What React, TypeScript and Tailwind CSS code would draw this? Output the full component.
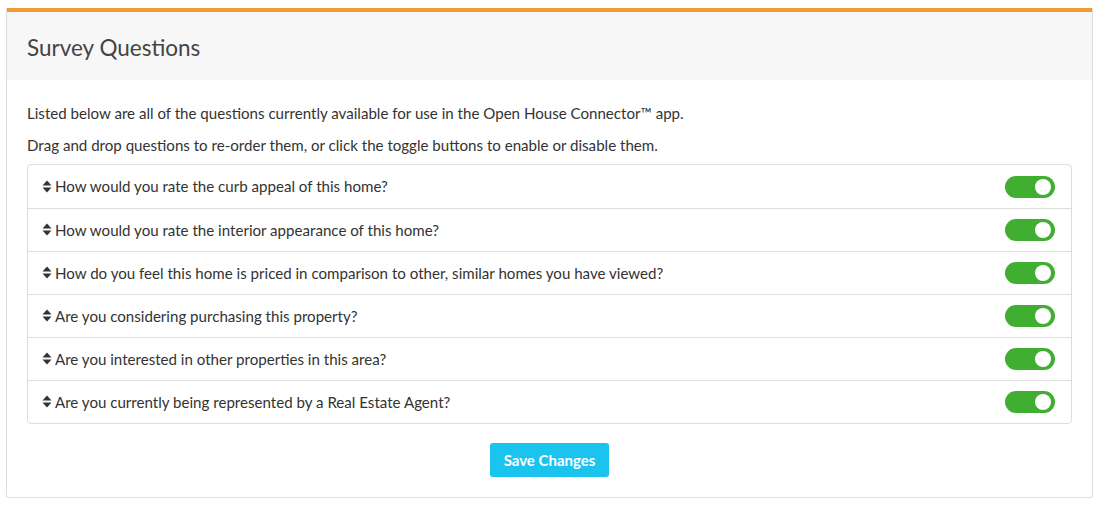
import React, { useState } from 'react';

const initialQuestions = [
  'How would you rate the curb appeal of this home?',
  'How would you rate the interior appearance of this home?',
  'How do you feel this home is priced in comparison to other, similar homes you have viewed?',
  'Are you considering purchasing this property?',
  'Are you interested in other properties in this area?',
  'Are you currently being represented by a Real Estate Agent?',
];

function SortIcon() {
  return (
    <svg width="10" height="13" viewBox="0 0 10 13" className="mr-[3px] shrink-0">
      <path d="M5 0.5 L9.5 5.5 L0.5 5.5 Z" fill="#333" />
      <path d="M5 12.5 L9.5 7.5 L0.5 7.5 Z" fill="#333" />
    </svg>
  );
}

function Toggle({ on, onClick }: { on: boolean; onClick: () => void }) {
  return (
    <button
      type="button"
      onClick={onClick}
      className={`relative h-[22px] w-[50px] rounded-full ${on ? 'bg-[#40ae31]' : 'bg-[#ccc]'}`}
    >
      <span
        className={`absolute top-[3px] h-[16px] w-[16px] rounded-full bg-white ${on ? 'left-[30px]' : 'left-[4px]'}`}
      />
    </button>
  );
}

export default function App() {
  const [enabled, setEnabled] = useState(initialQuestions.map(() => true));

  return (
    <div className="min-h-[508px] bg-white px-[6px] pt-[8px] font-['Lato',sans-serif] text-[#333]">
      <div className="rounded-b-[3px] border border-t-0 border-[#ddd]">
        <div className="border-t-4 border-[#f39a31] bg-[#f7f7f7] px-[20px] pb-[18px] pt-[22px]">
          <h2 className="text-[22.5px] leading-[28px] text-[#444]">Survey Questions</h2>
        </div>
        <div className="px-[20px] pb-[20px] pt-[22px]">
          <p className="text-[15.1px] leading-[22px]">
            Listed below are all of the questions currently available for use in the Open House Connector™ app.
          </p>
          <p className="mt-[10px] text-[15.1px] leading-[22px]">
            Drag and drop questions to re-order them, or click the toggle buttons to enable or disable them.
          </p>
          <ul className="mt-[8px] rounded-[4px] border border-[#ddd]">
            {initialQuestions.map((q, i) => (
              <li
                key={q}
                className={`flex h-[43px] items-center justify-between pl-[14px] pr-[14px] ${i > 0 ? 'border-t border-[#ddd]' : ''}`}
              >
                <span className="flex items-center text-[15.1px]">
                  <SortIcon />
                  {q}
                </span>
                <div className="mr-[2px] flex">
                  <Toggle
                    on={enabled[i]}
                    onClick={() => setEnabled(enabled.map((v, j) => (j === i ? !v : v)))}
                  />
                </div>
              </li>
            ))}
          </ul>
          <div className="mt-[19px] flex justify-center">
            <button
              type="button"
              className="h-[34px] rounded-[3px] bg-[#1bc3ef] px-[14px] text-[15px] font-bold text-white"
            >
              Save Changes
            </button>
          </div>
        </div>
      </div>
    </div>
  );
}
